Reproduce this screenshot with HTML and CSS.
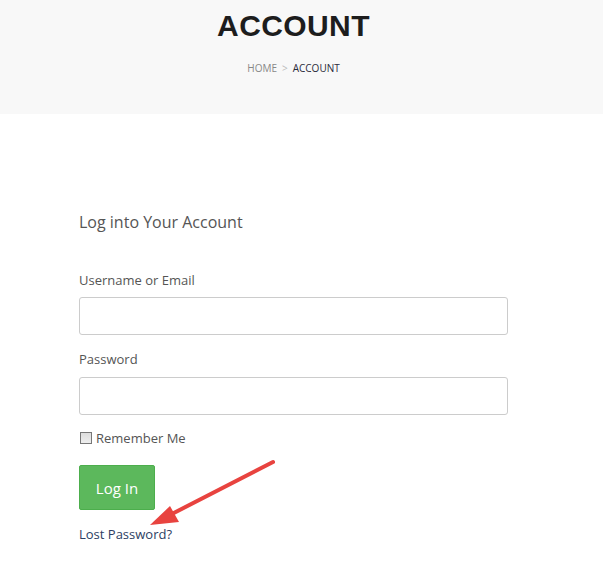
FILE: index.html
```html
<!DOCTYPE html>
<html>
<head>
<meta charset="utf-8">
<link rel="stylesheet" href="styles.css">
</head>
<body>
<header class="page-header">
  <h1 class="page-title">ACCOUNT</h1>
  <nav class="crumbs"><span class="crumb-home">HOME</span><span class="crumb-sep">&gt;</span><span class="crumb-current">ACCOUNT</span></nav>
</header>
<main class="content">
  <form class="login">
    <h2 class="login-title">Log into Your Account</h2>
    <label class="field-label">Username or Email</label>
    <div class="input"></div>
    <label class="field-label second">Password</label>
    <div class="input"></div>
    <div class="remember"><span class="checkbox"></span><span>Remember Me</span></div>
    <div class="btn">Log In</div>
    <a class="lost">Lost Password?</a>
  </form>
  <svg class="arrow" width="140" height="80" viewBox="0 0 140 80">
    <line x1="131" y1="4" x2="24" y2="59" stroke="#e8433f" stroke-width="4" stroke-linecap="round"/>
    <polygon points="8,67 28,48 37,64" fill="#e8433f"/>
  </svg>
</main>
</body>
</html>
```
FILE: styles.css
```css
html, body { margin: 0; padding: 0; background: #fff; }
body { font-family: "Open Sans", "Liberation Sans", sans-serif; color: #555; }
.page-header {
  height: 114px;
  background: #f8f8f8;
  display: flex;
  flex-direction: column;
  align-items: center;
  padding-right: 16px;
}
.page-title {
  margin: 8px 0 0;
  font-family: "Liberation Sans", Arial, sans-serif;
  font-weight: 700;
  font-size: 30px;
  line-height: 36px;
  color: #1d1d1d;
  letter-spacing: 0.4px;
}
.crumbs {
  margin-top: 18px;
  font-size: 10px;
  line-height: 12px;
  display: flex;
  gap: 5px;
}
.crumb-home { color: #888; }
.crumb-sep { color: #bbb; }
.crumb-current { color: #2a2a3a; }
.content { position: relative; padding: 97px 0 0 79px; }
.login { width: 429px; display: flex; flex-direction: column; align-items: flex-start; }
.login-title {
  margin: 0;
  font-weight: 400;
  font-size: 16px;
  line-height: 22px;
  color: #555;
}
.field-label {
  font-size: 13px;
  line-height: 18px;
  color: #555;
  margin-top: 38px;
}
.field-label.second { margin-top: 15px; }
.input {
  box-sizing: border-box;
  width: 429px;
  height: 38px;
  border: 1px solid #ccc;
  border-radius: 3px;
  margin-top: 8px;
}
.second + .input { margin-top: 9px; }
.remember {
  margin-top: 14px;
  display: flex;
  align-items: center;
  gap: 4px;
  font-size: 13px;
  line-height: 18px;
  color: #555;
}
.checkbox {
  box-sizing: border-box;
  width: 12px;
  height: 12px;
  border: 1px solid #777;
  background: linear-gradient(#ddd, #eee);
  margin-left: 1px;
}
.btn {
  margin-top: 18px;
  box-sizing: border-box;
  width: 76px;
  height: 45px;
  background: #5cb85c;
  border: 1px solid #4cae4c;
  border-radius: 2px;
  color: #fff;
  font-size: 15px;
  display: flex;
  align-items: center;
  justify-content: center;
}
.lost {
  margin-top: 15px;
  font-size: 13px;
  line-height: 18px;
  color: #2d3e63;
}
.arrow { position: absolute; left: 142px; top: 344px; }
```
